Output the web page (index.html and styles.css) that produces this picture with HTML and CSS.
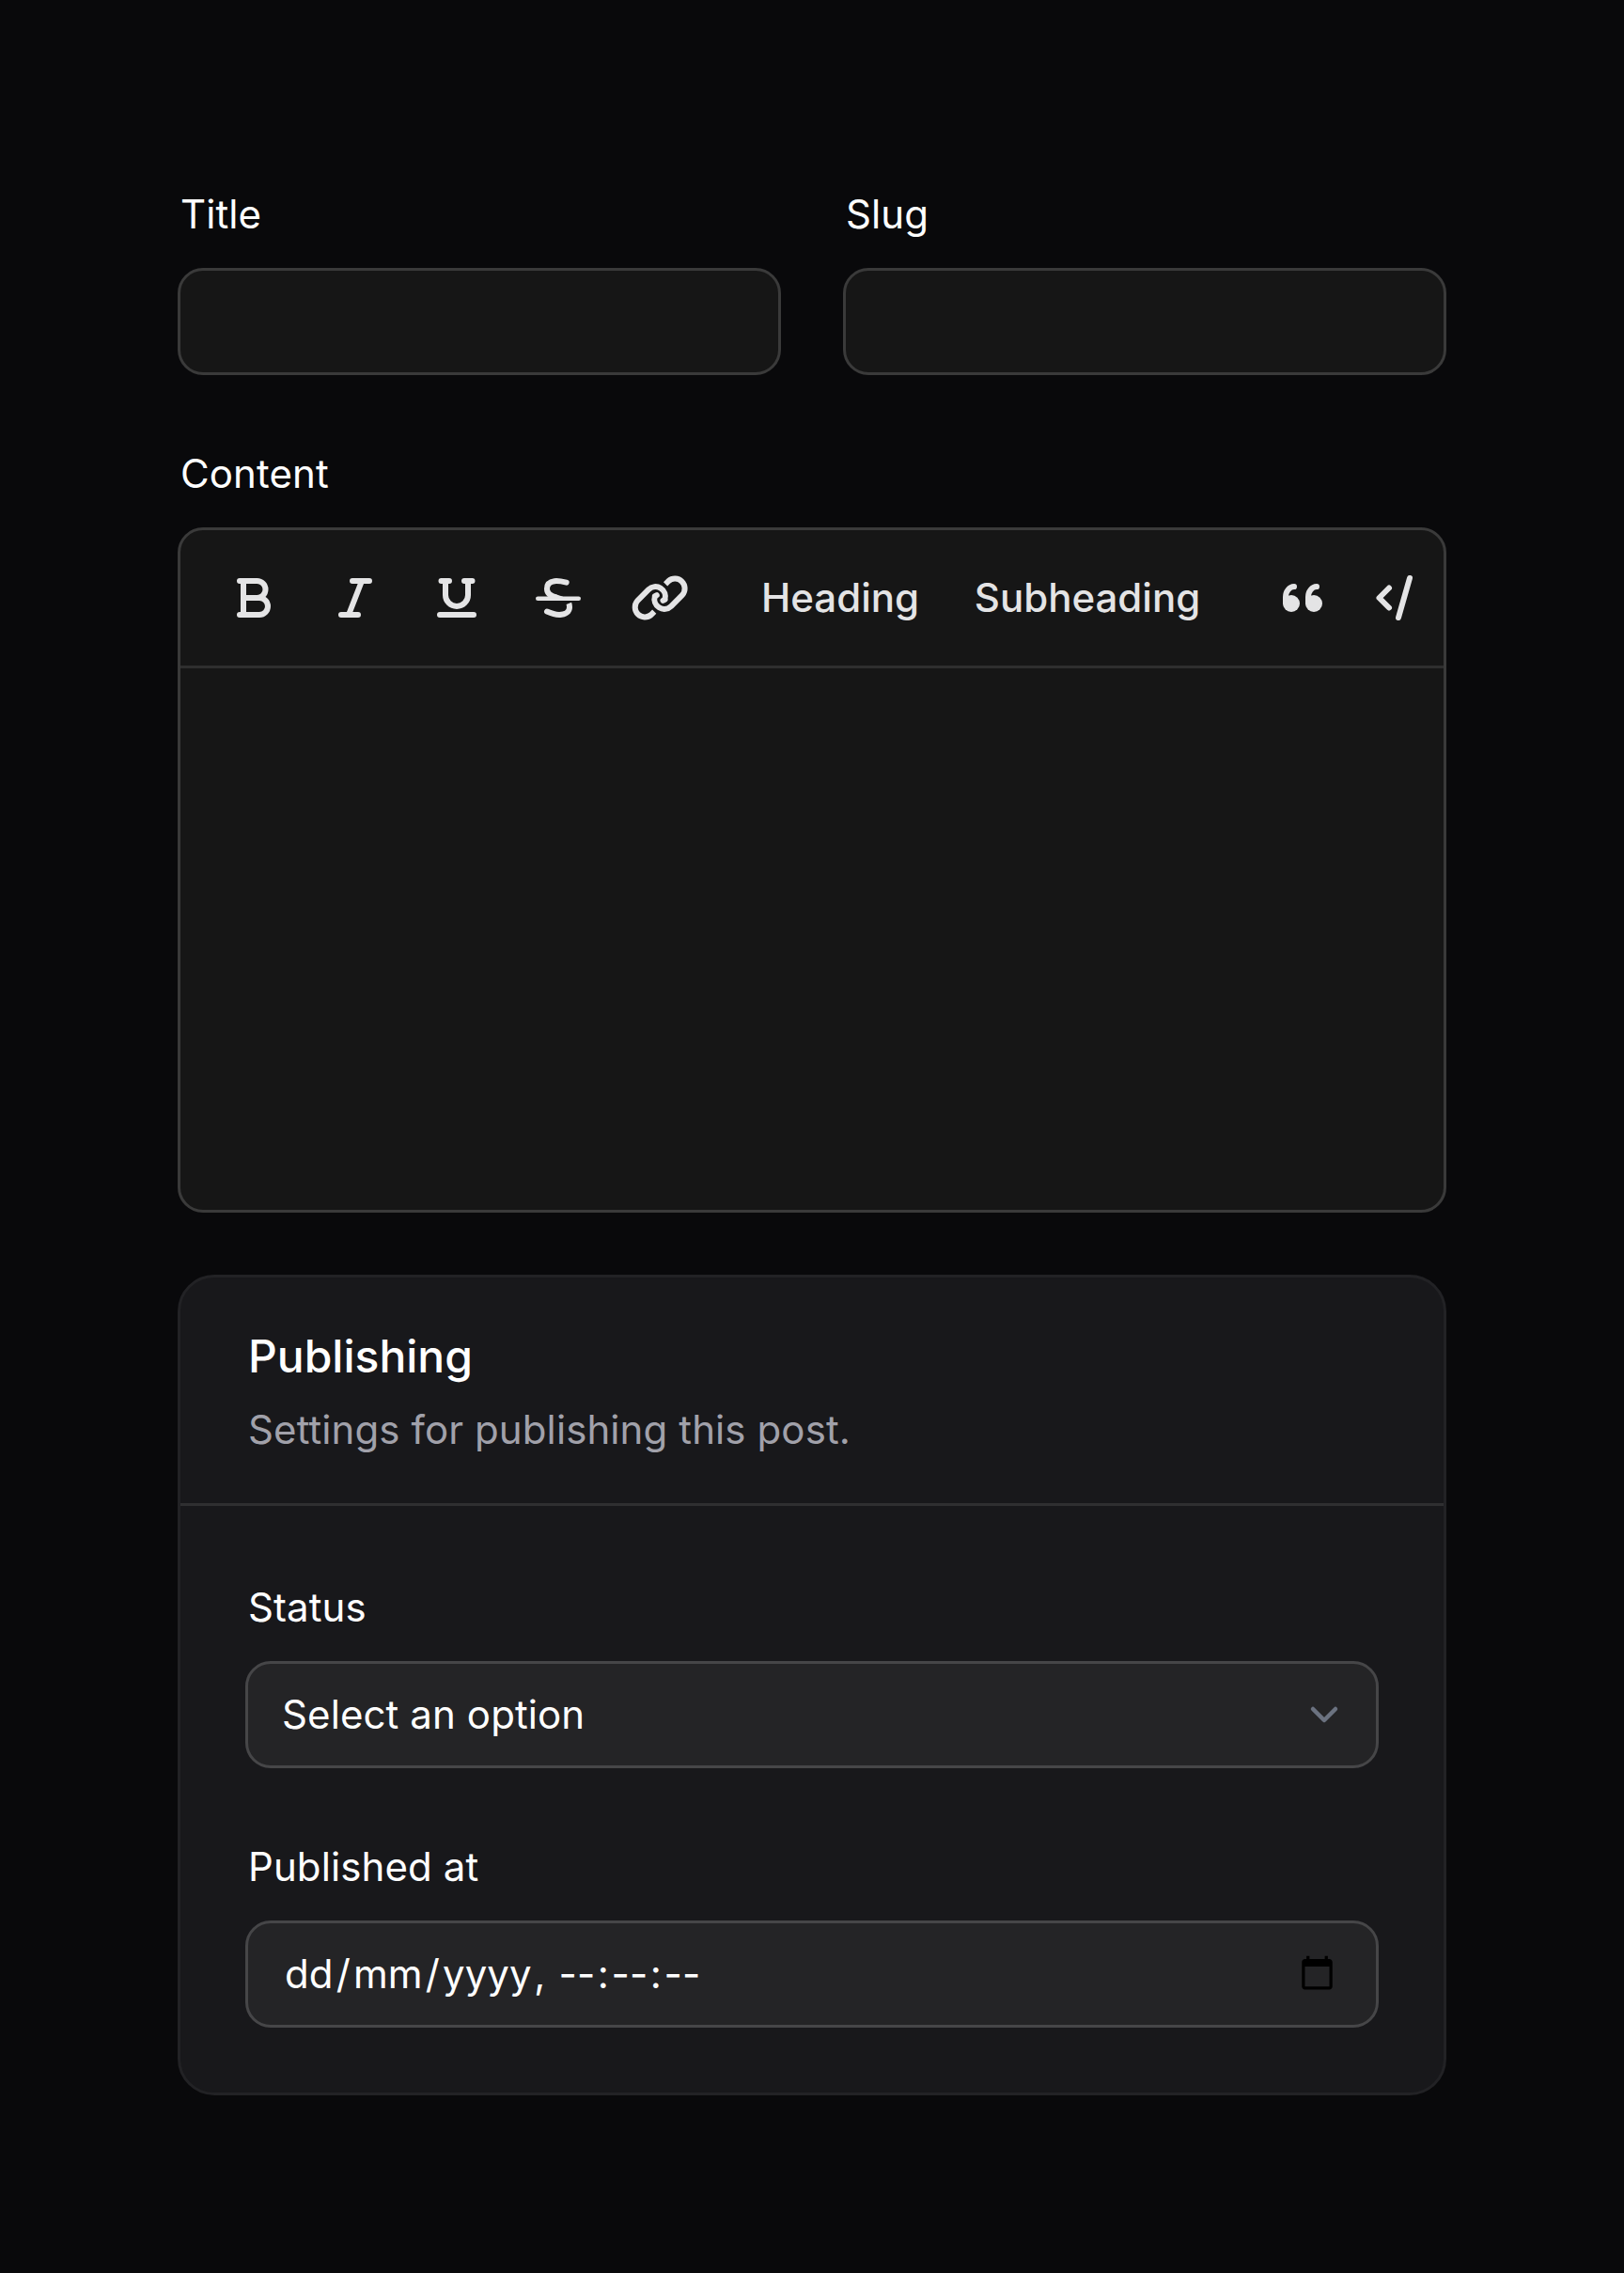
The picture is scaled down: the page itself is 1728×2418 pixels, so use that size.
FILE: index.html
```html
<!DOCTYPE html>
<html lang="en">
<head>
<meta charset="utf-8">
<title>Edit post</title>
<link rel="stylesheet" href="styles.css">
</head>
<body>
<form class="form">
  <div class="columns">
    <div class="field">
      <label class="label" for="title">Title</label>
      <input class="input" id="title" type="text">
    </div>
    <div class="field">
      <label class="label" for="slug">Slug</label>
      <input class="input" id="slug" type="text">
    </div>
  </div>

  <div class="field">
    <span class="label">Content</span>
    <div class="editor">
      <div class="toolbar">
        <button class="tool" type="button" aria-label="Bold">
          <svg class="icon" viewBox="0 0 72 72"><path d="M21 18h18.500a9 9 0 0 1 0 18H25M39 36h3a9 9 0 0 1 0 18H21M25 18v36"/></svg>
        </button>
        <button class="tool" type="button" aria-label="Italic">
          <svg class="icon" viewBox="0 0 72 72"><path d="M33 18h18M21 54h18M43 18L29 54"/></svg>
        </button>
        <button class="tool" type="button" aria-label="Underline">
          <svg class="icon" viewBox="0 0 72 72"><path d="M19.500 18H28M44 18h8.500M24 18v15a12 12 0 0 0 24 0V18M18 54h36"/></svg>
        </button>
        <button class="tool" type="button" aria-label="Strikethrough">
          <svg class="icon" viewBox="0 0 72 72"><path stroke-width="4.600" d="M14.300 36.700h43.400"/><path d="M44.700 19.600C39 18.300 35 17.800 32 18.200C26.500 18.900 24 22 24 26.200C24 31.500 27.500 33.600 34 35.600M24 50.500C29 52.800 33 54 37.500 53.900"/><path stroke-width="3" d="M32 33.500L40 36"/><path stroke-linecap="butt" d="M37 53.900C44 53.900 48 50.500 48 46C48 44.200 47.800 43 47.300 41.800"/></svg>
        </button>
        <button class="tool" type="button" aria-label="Link">
          <svg class="icon icon-link" viewBox="0 0 60 48"><g id="chain"><path stroke-linecap="butt" d="M24.200 38.700L21 41.900A10.500 10.500 0 0 1 6.200 27.100L18.100 15.100A10.500 10.500 0 0 1 35.400 25.900"/><path d="M35.400 25.900L33.500 26.900"/></g><use href="#chain" transform="rotate(180 30.150 24)"/></svg>
        </button>
        <button class="tool tool-heading" type="button">Heading</button>
        <button class="tool tool-subheading" type="button">Subheading</button>
        <button class="tool tool-quote" type="button" aria-label="Quote">
          <svg class="icon" viewBox="0 0 72 72"><g id="mark"><circle class="dot" cx="24" cy="42" r="9"/><path d="M18 41v-6C18 29 22 24.200 27 24"/></g><use href="#mark" x="24"/></svg>
        </button>
        <button class="tool tool-code" type="button" aria-label="Code">
          <svg class="icon" viewBox="0 0 72 72"><path d="M20 25.500L9.500 36L20 46.500M42 15L30 57"/></svg>
        </button>
      </div>
      <div class="editor-body"></div>
    </div>
  </div>

  <section class="card">
    <header class="card-header">
      <h2 class="card-title">Publishing</h2>
      <p class="card-text">Settings for publishing this post.</p>
    </header>
    <div class="card-body">
      <div class="field">
        <span class="label">Status</span>
        <div class="input control">
          <span class="value">Select an option</span>
          <svg class="chevron" viewBox="0 0 20 20"><path d="M6 8l4 4 4-4"/></svg>
        </div>
      </div>
      <div class="field">
        <span class="label">Published at</span>
        <div class="input control">
          <span class="date"><span>dd</span><span class="slash">/</span><span>mm</span><span class="slash">/</span><span>yyyy</span><span class="comma">,</span><span>--</span><span class="colon">:</span><span>--</span><span class="colon">:</span><span>--</span></span>
          <svg class="calendar" viewBox="0 0 24 24"><path d="M20 3h-1V1h-2v2H7V1H5v2H4c-1.100 0-2 .9-2 2v16c0 1.100.9 2 2 2h16c1.100 0 2-.9 2-2V5c0-1.100-.9-2-2-2zm0 18H4V8h16v13z"/></svg>
        </div>
      </div>
    </div>
  </section>
</form>
</body>
</html>
```
FILE: styles.css
```css
* {
  box-sizing: border-box;
}

body {
  margin: 0;
  min-height: 2418px;
  background: #09090b;
  color: #fff;
  font-family: Inter, "Liberation Sans", sans-serif;
  font-size: 42px;
  line-height: 72px;
  letter-spacing: 0.1px;
}

.form {
  display: flex;
  flex-direction: column;
  gap: 66px;
  width: 1350px;
  margin: 0 auto;
  padding-top: 192px;
}

.columns {
  display: grid;
  grid-template-columns: 1fr 1fr;
  gap: 66px;
}

.field {
  display: flex;
  flex-direction: column;
  gap: 21px;
  min-width: 0;
}

.columns .field {
  padding-bottom: 3px;
}

.label {
  padding-left: 3px;
}

.input {
  display: block;
  width: 100%;
  height: 114px;
  border: 3px solid #3a3a3a;
  border-radius: 27px;
  background: #161616;
  color: inherit;
  font: inherit;
  outline: none;
}

.editor {
  height: 729px;
  border: 3px solid #3a3a3a;
  border-radius: 27px;
  background: #161616;
}

.toolbar {
  display: flex;
  align-items: center;
  height: 147px;
  padding: 0 0 0 24px;
  border-bottom: 3px solid #2e2e2e;
}

.tool {
  display: flex;
  flex: none;
  align-items: center;
  justify-content: center;
  width: 108px;
  height: 72px;
  padding: 0;
  border: 0;
  background: none;
  color: #e4e4e5;
  font: inherit;
  font-weight: 500;
  letter-spacing: 0;
}

.tool-heading {
  width: 170px;
  margin-left: 53px;
}

.tool-subheading {
  width: 240px;
  margin-left: 58px;
}

.tool-quote {
  width: 72px;
  margin-left: 73px;
}

.tool-code {
  width: 72px;
  margin-left: 36px;
}

.icon {
  width: 72px;
  height: 72px;
  fill: none;
  stroke: currentColor;
  stroke-width: 6;
  stroke-linecap: round;
  stroke-linejoin: round;
}

.icon-link {
  width: 60px;
  height: 48px;
}

.dot {
  fill: currentColor;
  stroke: none;
}

.card {
  border: 3px solid #222225;
  border-radius: 39px;
  background: #18181b;
}

.card-header {
  height: 243px;
  padding: 48px 72px 0;
  border-bottom: 3px solid #2f2f31;
}

.card-title {
  margin: 0;
  font-size: 48px;
  font-weight: 500;
  line-height: 72px;
  letter-spacing: 0;
}

.card-text {
  margin: 6px 0 0;
  color: #a1a1aa;
}

.card-body {
  display: flex;
  flex-direction: column;
  gap: 69px;
  padding: 72px 69px 69px;
}

.control {
  display: flex;
  align-items: center;
  justify-content: space-between;
  padding-left: 36px;
  border-color: #464648;
  background: #242426;
}

.chevron {
  width: 60px;
  height: 60px;
  margin-right: 25px;
  fill: none;
  stroke: #6b7280;
  stroke-width: 1.5;
  stroke-linecap: round;
  stroke-linejoin: round;
}

.date {
  display: flex;
  padding-left: 3px;
}

.slash {
  margin: 0 3px;
}

.colon {
  margin: 0 2.5px;
}

.comma {
  margin: 0 14px 0 2.5px;
}

.calendar {
  width: 39px;
  height: 39px;
  margin: 0 43px 3px 0;
  fill: #000;
}
```
